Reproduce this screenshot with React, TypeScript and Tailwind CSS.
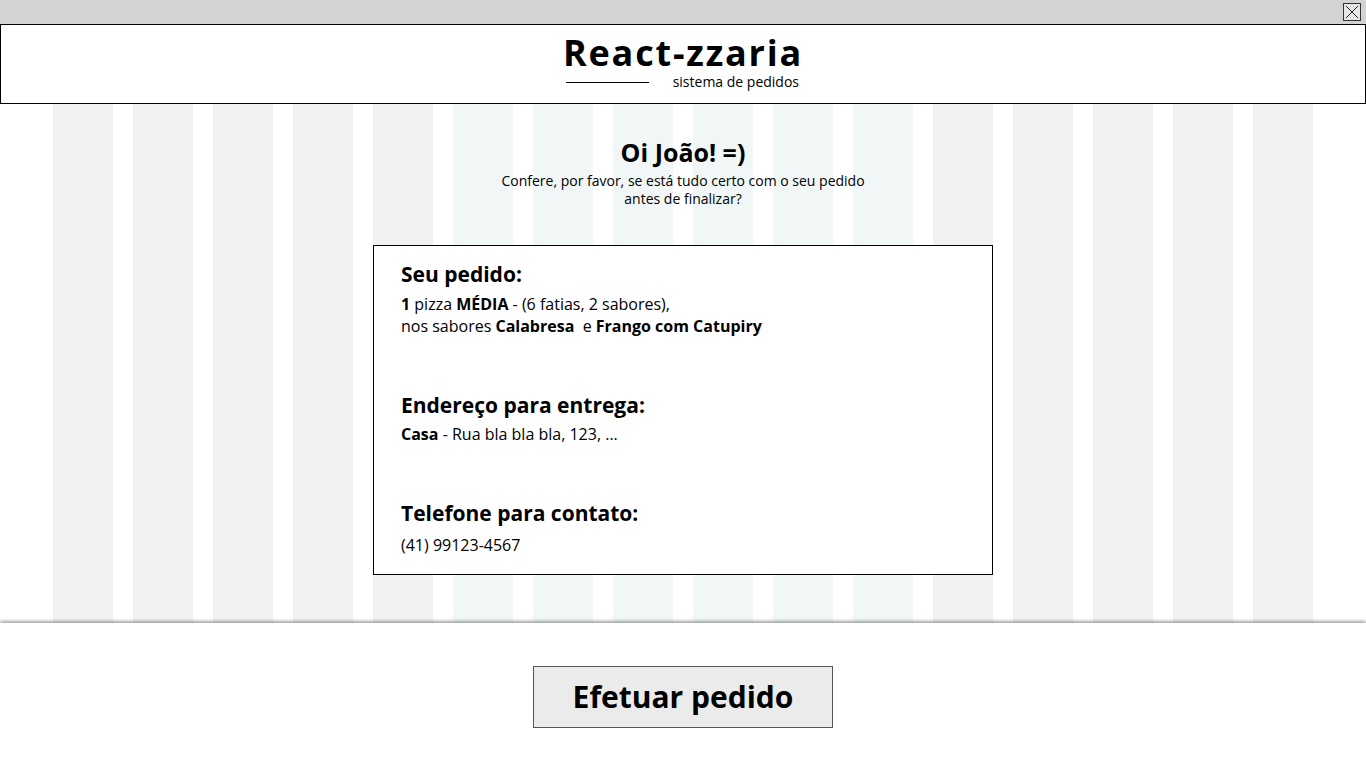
import React from "react";

const cols = Array.from({ length: 16 }, (_, i) => i);

export default function App() {
  return (
    <div className="w-[1366px] h-[768px] flex flex-col bg-white text-black overflow-hidden" style={{ fontFamily: '"Open Sans", "Noto Sans", sans-serif' }}>
      <div className="h-[24px] bg-[#d3d3d3] flex justify-end items-center pr-[5px] shrink-0">
        <div className="w-[18px] h-[18px] border border-[#333] bg-[#e6e6e6] flex items-center justify-center">
          <svg width="14" height="14" viewBox="0 0 14 14">
            <path d="M1 1 L13 13 M13 1 L1 13" stroke="#222" strokeWidth="1" fill="none" />
          </svg>
        </div>
      </div>
      <header className="h-[80px] border border-black shrink-0 flex justify-center items-start pt-[10px]">
        <div className="inline-flex flex-col">
          <h1 className="text-[36px] font-bold leading-[36px] tracking-[1.8px]">React-zzaria</h1>
          <div className="flex items-center justify-between pl-[3px] pr-[4px] mt-[2px]">
            <div className="w-[83px] h-[1px] bg-black" />
            <span className="text-[14px] leading-[18px]">sistema de pedidos</span>
          </div>
        </div>
      </header>
      <main className="relative h-[519px] shrink-0">
        <div className="absolute inset-0 flex justify-center gap-[20px]">
          {cols.map((i) => (
            <div key={i} className={`w-[60px] h-full ${i >= 5 && i <= 10 ? "bg-[#f0f7f6]" : "bg-[#f1f1f1]"}`} />
          ))}
        </div>
        <div className="relative flex flex-col items-center pt-[32px]">
          <h2 className="text-[25px] font-bold leading-[32px]">Oi João! =)</h2>
          <p className="text-[14px] leading-[18px] text-center mt-[4px]">
            Confere, por favor, se está tudo certo com o seu pedido
            <br />
            antes de finalizar?
          </p>
          <section className="mt-[37px] w-[620px] h-[330px] border border-black bg-white px-[27px] pt-[13px]">
            <h3 className="text-[21px] font-bold leading-[30px]">Seu pedido:</h3>
            <p className="text-[16px] leading-[22px] mt-[4px]">
              <b>1</b> pizza <b>MÉDIA</b> - (6 fatias, 2 sabores),
              <br />
              nos sabores <b>Calabresa</b>&nbsp; e <b>Frango com Catupiry</b>
            </p>
            <h3 className="text-[21px] font-bold leading-[30px] mt-[53px]">Endereço para entrega:</h3>
            <p className="text-[16px] leading-[22px] mt-[3px]">
              <b>Casa</b> - Rua bla bla bla, 123, ...
            </p>
            <h3 className="text-[21px] font-bold leading-[30px] mt-[53px]">Telefone para contato:</h3>
            <p className="text-[16px] leading-[22px] mt-[6px]">(41) 99123-4567</p>
          </section>
        </div>
      </main>
      <footer className="flex-1 flex justify-center pt-[43px] shadow-[0_-2px_3px_rgba(0,0,0,0.35)] relative bg-white">
        <button className="w-[300px] h-[62px] bg-[#ebebeb] border border-[#555] text-[30px] font-bold leading-none">
          Efetuar pedido
        </button>
      </footer>
    </div>
  );
}
